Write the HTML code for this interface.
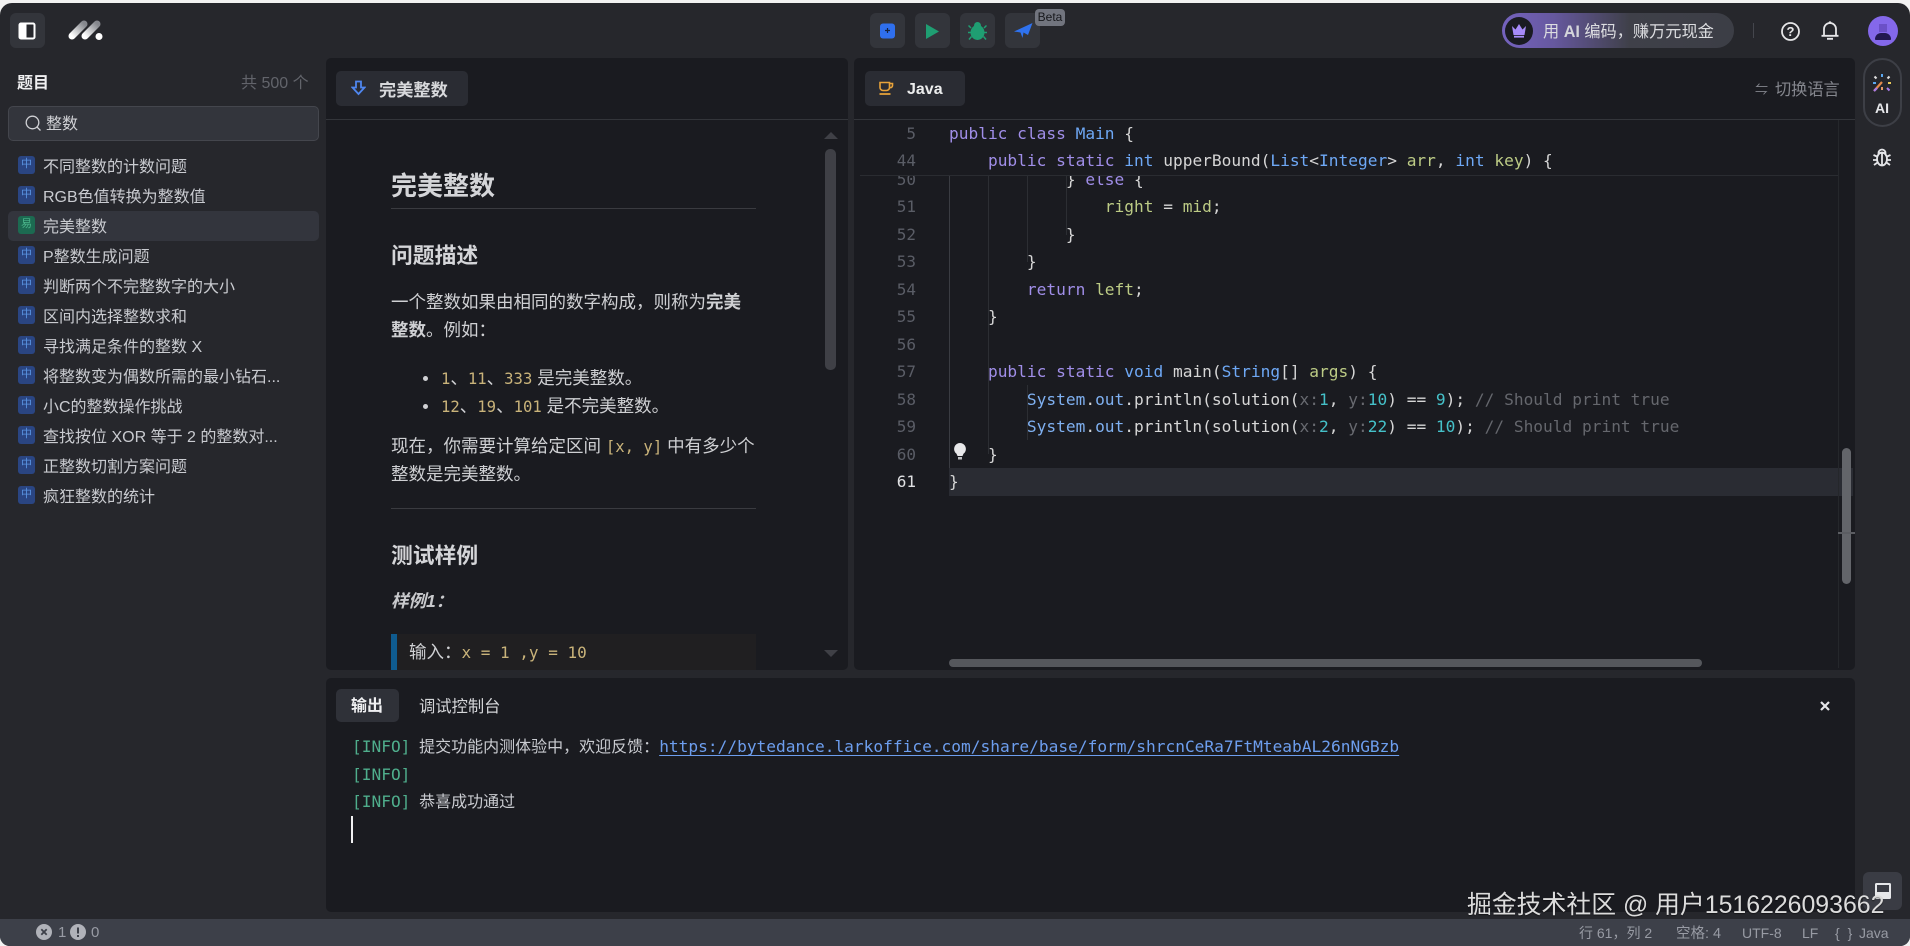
<!DOCTYPE html>
<html lang="zh"><head><meta charset="utf-8"><title>完美整数</title>
<style>
*{box-sizing:border-box;margin:0;padding:0}
html,body{width:1910px;height:946px;overflow:hidden;background:#f2f2f2}
body{font-family:"Liberation Sans","Noto Sans CJK SC",sans-serif;position:relative}
#app{position:absolute;left:0;top:3px;width:1910px;height:943px;background:#26272c;border-radius:12px 12px 10px 10px;overflow:hidden}
.a{position:absolute;white-space:pre}
.abs{position:absolute}
#root{position:absolute;left:0;top:-3px;width:1910px;height:946px}
.btn{position:absolute;top:13px;width:35px;height:35px;border-radius:6px;background:#33353b}
.panel{position:absolute;background:#1a1b20;border-radius:5px}
.row{position:absolute;left:43px;font-size:16px;line-height:24px;color:#c9cbd0;white-space:pre}
.tag{position:absolute;left:18px;width:17px;height:18px;border-radius:3px;background:#2a4582;color:#5a94e2;font-size:11px;line-height:17px;text-align:center}
.md{color:#cfd0d3;font-size:17.5px;line-height:28px}
.h{color:#d4d5d8;font-weight:700}
.hr{position:absolute;left:391px;width:365px;height:1px;background:#3a3b40}
.mc{font-family:"DejaVu Sans Mono",monospace;color:#c9b37a;font-size:15.6px}
.ln{position:absolute;left:860px;width:56px;text-align:right;font:16px/27.5px "DejaVu Sans Mono",monospace;color:#5a5d66}
.cd{position:absolute;left:949px;font:16.18px/27.5px "DejaVu Sans Mono",monospace;color:#d6d6d6;white-space:pre}
.k{color:#a08ee8}.t{color:#6ea8f5}.v{color:#bccb85}.n{color:#45c1c9}.c{color:#65676d}.i{color:#686a70}.b{color:#7fb0f0}
.con{position:absolute;left:352px;font:16.18px/27px "DejaVu Sans Mono","Noto Sans CJK SC",monospace;color:#c9cbd0;white-space:pre}
.con .z{font-size:16px;margin-left:-1px}
.inf{color:#4fae8c}
.st{position:absolute;top:923px;font-size:14px;line-height:20px;color:#989ba4;white-space:pre}
.guide{position:absolute;width:1px;background:#2c2e33}
</style></head><body>
<div id="app"><div id="root">

<!-- top bar -->
<div class="btn" style="left:10px"></div>
<svg class="abs" style="left:18px;top:22px" width="20" height="18" viewBox="0 0 20 18"><rect x="1.5" y="1.5" width="15" height="15" rx="1.5" fill="#26272c" stroke="#fff" stroke-width="2"/><rect x="1.5" y="1.5" width="7" height="15" fill="#fff"/></svg>
<svg class="abs" style="left:66px;top:18px" width="40" height="24" viewBox="0 0 40 24"><defs><linearGradient id="lg" x1="0" y1="1" x2="1" y2="0"><stop offset="0" stop-color="#fff"/><stop offset="1" stop-color="#85878d"/></linearGradient></defs><path d="M6 18 L18 6" stroke="url(#lg)" stroke-width="7" stroke-linecap="round"/><path d="M19 18 L31 6" stroke="url(#lg)" stroke-width="7" stroke-linecap="round"/><circle cx="33" cy="18.500" r="3.500" fill="#fff"/></svg>

<div class="btn" style="left:870px"></div><div class="btn" style="left:915px"></div><div class="btn" style="left:960px"></div><div class="btn" style="left:1005px"></div>
<svg class="abs" style="left:880px;top:23px" width="16" height="16" viewBox="0 0 16 16"><rect width="15" height="15" y=".5" rx="3" fill="#2f6fed"/><path d="M7.500 5v5M5 7.500h5" stroke="#16233f" stroke-width="1.200"/></svg>
<svg class="abs" style="left:926px;top:24px" width="14" height="15" viewBox="0 0 14 15"><path d="M0 0L13 7.500L0 15Z" fill="#1f9e72"/></svg>
<svg class="abs" style="left:968px;top:21px" width="19" height="20" viewBox="0 0 19 20"><ellipse cx="9.500" cy="11.500" rx="7" ry="7.500" fill="#1f9e72"/><circle cx="9.500" cy="4.500" r="3.500" fill="#1f9e72"/><path d="M3 7L0.500 4.500M3.500 11.500H0M3.500 15.500L1 18.500M16 7l2.500-2.500M15.500 11.500H19M15.500 15.500l2.500 3" stroke="#1f9e72" stroke-width="1.500"/></svg>
<svg class="abs" style="left:1014px;top:22px" width="19" height="18" viewBox="0 0 19 18"><path d="M0 9.500L18.500 1L14 13L9.500 10.500L8.500 16L6.500 10.500Z" fill="#2f72ee"/></svg>
<div class="abs" style="left:1035px;top:9px;width:30px;height:17px;border-radius:4px;background:#71747e;color:#17181c;font-size:12px;line-height:17px;text-align:center">Beta</div>

<div class="abs" style="left:1502px;top:13px;width:232px;height:35px;border-radius:18px;background:linear-gradient(90deg,#7563bf 0%,#66589f 22%,#3f4049 55%,#3c3e46 100%)"></div>
<div class="abs" style="left:1505px;top:17px;width:28px;height:28px;border-radius:50%;background:#1a1b22"></div>
<svg class="abs" style="left:1511px;top:23px" width="16" height="15" viewBox="0 0 16 15"><path d="M1 3L4.500 6.500L8 1L11.500 6.500L15 3L13.500 12H2.500Z" fill="#a78bfa"/><rect x="3" y="12.800" width="10" height="1.800" fill="#a78bfa"/></svg>
<div class="a" style="left:1543px;top:20px;font-size:16.2px;line-height:24px;color:#dcdde0">用 <b style="color:#d4d5da">AI</b> 编码，赚万元现金</div>
<div class="abs" style="left:1753px;top:23px;width:1px;height:15px;background:#44464d"></div>
<svg class="abs" style="left:1780px;top:21px" width="21" height="21" viewBox="0 0 21 21"><circle cx="10.500" cy="10.500" r="8.500" fill="none" stroke="#e6e6e8" stroke-width="1.800"/><text x="10.500" y="15" font-size="13" font-weight="700" fill="#e6e6e8" text-anchor="middle" font-family="Liberation Sans">?</text></svg>
<svg class="abs" style="left:1820px;top:20px" width="20" height="21" viewBox="0 0 20 21"><path d="M4 15.500V9a6 6 0 0 1 12 0v6.500M1.500 15.800H18.500" fill="none" stroke="#e6e6e8" stroke-width="1.800"/><circle cx="10" cy="2.500" r="1.300" fill="#e6e6e8"/><path d="M7 18.800h6" stroke="#e6e6e8" stroke-width="1.800"/></svg>
<div class="abs" style="left:1868px;top:16px;width:30px;height:30px;border-radius:50%;background:#8468ea;overflow:hidden"><div class="abs" style="left:11px;top:8px;width:8px;height:8px;background:#6b50c7"></div><div class="abs" style="left:7px;top:17px;width:16px;height:7px;border-radius:7px 7px 1px 1px;background:#22184f"></div></div>

<!-- sidebar -->
<div class="a" style="left:17px;top:72px;font-size:16px;line-height:24px;font-weight:700;color:#f0f0f2">题目</div>
<div class="a" style="left:241px;top:72px;font-size:16px;line-height:24px;color:#62646b">共 500 个</div>
<div class="abs" style="left:8px;top:106px;width:311px;height:35px;border-radius:5px;background:#33353c;border:1px solid #44464d"></div>
<svg class="abs" style="left:25px;top:115px" width="17" height="17" viewBox="0 0 17 17"><circle cx="7.500" cy="7.500" r="6.300" fill="none" stroke="#d0d1d5" stroke-width="1.300"/><path d="M12 12l3.500 3.500" stroke="#d0d1d5" stroke-width="1.300"/></svg>
<div class="a" style="left:46px;top:113px;font-size:16px;line-height:24px;color:#d0d1d5">整数</div>
<div class="abs" style="left:8px;top:211px;width:311px;height:30px;border-radius:5px;background:#33353d"></div>

<div class="tag" style="top:156px">中</div><div class="row" style="top:156px">不同整数的计数问题</div>
<div class="tag" style="top:186px">中</div><div class="row" style="top:186px">RGB色值转换为整数值</div>
<div class="tag" style="top:216px;background:#1c6a51;color:#4ab68b">易</div><div class="row" style="top:216px">完美整数</div>
<div class="tag" style="top:246px">中</div><div class="row" style="top:246px">P整数生成问题</div>
<div class="tag" style="top:276px">中</div><div class="row" style="top:276px">判断两个不完整数字的大小</div>
<div class="tag" style="top:306px">中</div><div class="row" style="top:306px">区间内选择整数求和</div>
<div class="tag" style="top:336px">中</div><div class="row" style="top:336px">寻找满足条件的整数 X</div>
<div class="tag" style="top:366px">中</div><div class="row" style="top:366px">将整数变为偶数所需的最小钻石...</div>
<div class="tag" style="top:396px">中</div><div class="row" style="top:396px">小C的整数操作挑战</div>
<div class="tag" style="top:426px">中</div><div class="row" style="top:426px">查找按位 XOR 等于 2 的整数对...</div>
<div class="tag" style="top:456px">中</div><div class="row" style="top:456px">正整数切割方案问题</div>
<div class="tag" style="top:486px">中</div><div class="row" style="top:486px">疯狂整数的统计</div>

<!-- description panel -->
<div class="panel" style="left:326px;top:58px;width:522px;height:612px"></div>
<div class="abs" style="left:326px;top:119px;width:522px;height:1px;background:#33353a"></div>
<div class="abs" style="left:336px;top:71px;width:132px;height:35px;border-radius:5px;background:#2a2c33"></div>
<svg class="abs" style="left:351px;top:80px" width="15" height="16" viewBox="0 0 15 16"><path d="M5 1.500h5v6h3.500L7.500 14 1.500 7.500H5Z" fill="none" stroke="#4f86ee" stroke-width="1.800"/></svg>
<div class="a" style="left:379px;top:78px;font-size:17.2px;line-height:24px;font-weight:700;color:#d8d9dc">完美整数</div>

<div class="a h" style="left:391px;top:168px;font-size:26px;line-height:36px">完美整数</div>
<div class="hr" style="top:208px"></div>
<div class="a h" style="left:391px;top:241px;font-size:21.8px;line-height:30px">问题描述</div>
<div class="a md" style="left:391px;top:288px">一个整数如果由相同的数字构成，则称为<b>完美</b></div>
<div class="a md" style="left:391px;top:316px"><b>整数</b>。例如：</div>
<div class="abs" style="left:423px;top:376px;width:5px;height:5px;border-radius:50%;background:#d0d1d4"></div>
<div class="a md" style="left:441px;top:364px"><span class="mc">1</span>、<span class="mc">11</span>、<span class="mc">333</span> 是完美整数。</div>
<div class="abs" style="left:423px;top:404px;width:5px;height:5px;border-radius:50%;background:#d0d1d4"></div>
<div class="a md" style="left:441px;top:392px"><span class="mc">12</span>、<span class="mc">19</span>、<span class="mc">101</span> 是不完美整数。</div>
<div class="a md" style="left:391px;top:432px">现在，你需要计算给定区间 <span class="mc">[x, y]</span> 中有多少个</div>
<div class="a md" style="left:391px;top:460px">整数是完美整数。</div>
<div class="hr" style="top:508px"></div>
<div class="a h" style="left:391px;top:541px;font-size:21.8px;line-height:30px">测试样例</div>
<div class="a" style="left:391px;top:587px;font-size:17.5px;line-height:28px;font-weight:700;font-style:italic;color:#c8c9cc">样例1：</div>
<div class="abs" style="left:391px;top:634px;width:365px;height:36px;background:#201f21"></div>
<div class="abs" style="left:391px;top:634px;width:6px;height:36px;background:#0f5b8f"></div>
<div class="a md" style="left:409px;top:638px">输入：<span class="mc" style="font-size:16px">x = 1 ,y = 10</span></div>
<div class="abs" style="left:825px;top:149px;width:11px;height:221px;border-radius:5px;background:#3f4046"></div>
<svg class="abs" style="left:823px;top:131px" width="16" height="9"><path d="M8 1L15 8H1Z" fill="#3f4046"/></svg>
<svg class="abs" style="left:823px;top:649px" width="16" height="9"><path d="M1 1H15L8 8Z" fill="#3f4046"/></svg>

<!-- editor panel -->
<div class="panel" style="left:854px;top:58px;width:1001px;height:612px"></div>
<div class="abs" style="left:854px;top:119px;width:1001px;height:1px;background:#33353a"></div>
<div class="abs" style="left:865px;top:71px;width:100px;height:35px;border-radius:5px;background:#2a2c33"></div>
<svg class="abs" style="left:878px;top:81px" width="16" height="15" viewBox="0 0 16 15"><path d="M2 1.500h9.500v5a3 3 0 0 1-3 3h-3.500a3 3 0 0 1-3-3ZM11.500 2.500h3v2a2 2 0 0 1-3 1.800" fill="none" stroke="#e8a33a" stroke-width="1.600"/><path d="M1.500 13h11" stroke="#e8a33a" stroke-width="1.800"/></svg>
<div class="a" style="left:907px;top:78px;font-size:16px;line-height:24px;font-weight:700;color:#eceded">Java</div>
<div class="a" style="left:1755px;top:78px;font-size:13px;line-height:24px;color:#85878e">⇋</div>
<div class="a" style="left:1775px;top:78px;font-size:16.2px;line-height:24px;color:#85878e">切换语言</div>

<!-- code body clipped -->
<div class="abs" style="left:854px;top:175px;width:1001px;height:493px;overflow:hidden">
 <div class="abs" style="left:95px;top:293px;width:904px;height:28px;background:#2a2c33"></div>
 <div class="abs" style="left:-854px;top:-175px;width:1910px;height:946px">
  <div class="guide" style="left:949px;top:175px;height:293px;background:#3a3c42"></div>
  <div class="guide" style="left:988px;top:175px;height:279px"></div>
  <div class="guide" style="left:1027px;top:175px;height:87px"></div>
  <div class="guide" style="left:1066px;top:175px;height:60px"></div>
  <div class="guide" style="left:1027px;top:385px;height:55px"></div>
  <div class="ln" style="top:165.75px">50</div><div class="cd" style="top:165.75px">            } <span class="k">else</span> {</div>
  <div class="ln" style="top:193.25px">51</div><div class="cd" style="top:193.25px">                <span class="v">right</span> = <span class="v">mid</span>;</div>
  <div class="ln" style="top:220.75px">52</div><div class="cd" style="top:220.75px">            }</div>
  <div class="ln" style="top:248.25px">53</div><div class="cd" style="top:248.25px">        }</div>
  <div class="ln" style="top:275.75px">54</div><div class="cd" style="top:275.75px">        <span class="k">return</span> <span class="v">left</span>;</div>
  <div class="ln" style="top:303.25px">55</div><div class="cd" style="top:303.25px">    }</div>
  <div class="ln" style="top:330.75px">56</div>
  <div class="ln" style="top:358.25px">57</div><div class="cd" style="top:358.25px">    <span class="k">public static</span> <span class="t">void</span> main(<span class="t">String</span>[] <span class="v">args</span>) {</div>
  <div class="ln" style="top:385.75px">58</div><div class="cd" style="top:385.75px">        <span class="b">System</span>.<span class="b">out</span>.println(solution(<span class="i">x:</span><span class="n">1</span>, <span class="i">y:</span><span class="n">10</span>) == <span class="n">9</span>); <span class="c">// Should print true</span></div>
  <div class="ln" style="top:413.25px">59</div><div class="cd" style="top:413.25px">        <span class="b">System</span>.<span class="b">out</span>.println(solution(<span class="i">x:</span><span class="n">2</span>, <span class="i">y:</span><span class="n">22</span>) == <span class="n">10</span>); <span class="c">// Should print true</span></div>
  <div class="ln" style="top:440.75px">60</div><div class="cd" style="top:440.75px">    }</div>
  <div class="ln" style="top:468.25px;color:#e0e1e3">61</div><div class="cd" style="top:468.25px">}</div>
 </div>
</div>
<!-- sticky -->
<div class="abs" style="left:860px;top:120px;width:978px;height:56px;background:#1a1b20;border-bottom:1px solid #2a2c31"></div>
<div class="ln" style="top:119.75px">5</div><div class="cd" style="top:119.75px"><span class="k">public class</span> <span class="t">Main</span> {</div>
<div class="ln" style="top:147.25px">44</div><div class="cd" style="top:147.25px">    <span class="k">public static</span> <span class="t">int</span> upperBound(<span class="t">List</span>&lt;<span class="t">Integer</span>&gt; <span class="v">arr</span>, <span class="t">int</span> <span class="v">key</span>) {</div>
<svg class="abs" style="left:953px;top:442px" width="14" height="18" viewBox="0 0 14 18"><path d="M7 1a6 6 0 0 1 3.500 10.800L9.500 14h-5L3.500 11.800A6 6 0 0 1 7 1Z" fill="#e8e8ea"/><rect x="5" y="15" width="4" height="2.500" fill="#c0c1c4"/></svg>
<div class="abs" style="left:1838px;top:120px;width:1px;height:548px;background:#25272b"></div>
<div class="abs" style="left:1842px;top:448px;width:9px;height:136px;border-radius:5px;background:#63656a"></div>
<div class="abs" style="left:1838px;top:532px;width:17px;height:2px;background:#5b5d62"></div>
<div class="abs" style="left:949px;top:659px;width:753px;height:8px;border-radius:4px;background:#55575c"></div>

<!-- right rail -->
<div class="abs" style="left:1863px;top:58px;width:39px;height:69px;border-radius:20px;border:2px solid #3d3f46"></div>
<svg class="abs" style="left:1871px;top:72px" width="22" height="22" viewBox="0 0 22 22"><path d="M3 19L11 10" stroke="#e58a4a" stroke-width="2.200"/><path d="M3 19l3-3" stroke="#a97be8" stroke-width="2.200"/><path d="M11 2v3" stroke="#5ba8f0" stroke-width="2"/><path d="M3.500 4.500l2 2" stroke="#e0e0e0" stroke-width="2"/><path d="M18.500 4.500l-2 2" stroke="#e0e0e0" stroke-width="2"/><path d="M2 11h3" stroke="#5ba8f0" stroke-width="2"/><path d="M17 11h3" stroke="#e8c95a" stroke-width="2"/><path d="M16 16l2.500 2.500" stroke="#a97be8" stroke-width="2"/><path d="M11 15v3" stroke="#e89a6a" stroke-width="2"/></svg>
<div class="a" style="left:1875px;top:99px;font-size:14px;line-height:18px;font-weight:700;color:#e6e7ea">AI</div>
<svg class="abs" style="left:1873px;top:147px" width="18" height="20" viewBox="0 0 18 20"><ellipse cx="9" cy="12" rx="5" ry="6.500" fill="none" stroke="#e4e5e8" stroke-width="1.800"/><path d="M5.500 6a3.500 3.500 0 0 1 7 0ZM9 6v12.500M0.500 8L4 9.500M0 13h4M1 18l3.500-2.500M17.500 8L14 9.500M18 13h-4M17 18l-3.500-2.500" fill="none" stroke="#e4e5e8" stroke-width="1.800"/></svg>
<div class="abs" style="left:1863px;top:872px;width:39px;height:38px;border-radius:6px;background:#3a3c44"></div>
<svg class="abs" style="left:1874px;top:882px" width="18" height="18" viewBox="0 0 18 18"><rect x="1" y="1" width="16" height="16" rx="1.500" fill="#e6e7ea"/><rect x="3" y="3" width="12" height="7" fill="#3a3c44"/></svg>

<!-- console -->
<div class="panel" style="left:326px;top:678px;width:1529px;height:234px"></div>
<div class="abs" style="left:336px;top:689px;width:63px;height:33px;border-radius:5px;background:#2f3138"></div>
<div class="a" style="left:351px;top:695px;font-size:16px;line-height:24px;font-weight:700;color:#f0f0f2">输出</div>
<div class="a" style="left:419px;top:695px;font-size:16.3px;line-height:24px;color:#d4d5d8">调试控制台</div>
<svg class="abs" style="left:1819px;top:700px" width="12" height="12" viewBox="0 0 12 12"><path d="M2 2l8 8M10 2l-8 8" stroke="#e4e5e8" stroke-width="2.200"/></svg>
<div class="con" style="top:733px"><span class="inf">[INFO]</span> <span class="z">提交功能内测体验中，欢迎反馈：</span><span style="color:#6d9eee;text-decoration:underline;text-underline-offset:3px">https://bytedance.larkoffice.com/share/base/form/shrcnCeRa7FtMteabAL26nNGBzb</span></div>
<div class="con" style="top:761px"><span class="inf">[INFO]</span></div>
<div class="con" style="top:788px"><span class="inf">[INFO]</span> <span class="z">恭喜成功通过</span></div>
<div class="abs" style="left:351px;top:816px;width:2px;height:27px;background:#f0f0f2"></div>

<!-- status bar -->
<div class="abs" style="left:0;top:919px;width:1910px;height:27px;background:#3d4049"></div>
<svg class="abs" style="left:36px;top:924px" width="16" height="16" viewBox="0 0 16 16"><circle cx="8" cy="8" r="8" fill="#b0b2b9"/><path d="M5.300 5.300l5.400 5.400M10.700 5.300l-5.400 5.400" stroke="#3d4049" stroke-width="1.800"/></svg>
<div class="st" style="left:58px;font-size:15px">1</div>
<svg class="abs" style="left:70px;top:924px" width="16" height="16" viewBox="0 0 16 16"><circle cx="8" cy="8" r="8" fill="#b0b2b9"/><path d="M8 3.500v6M8 11v2" stroke="#3d4049" stroke-width="2"/></svg>
<div class="st" style="left:91px;font-size:15px">0</div>
<div class="st" style="left:1579px">行 61，列 2</div>
<div class="st" style="left:1676px;top:924px;font-size:14.5px">空格: 4</div>
<div class="st" style="left:1742px">UTF-8</div>
<div class="st" style="left:1802px">LF</div>
<div class="st" style="left:1835px;letter-spacing:2px">{ }</div>
<div class="st" style="left:1859px">Java</div>

<!-- watermark -->
<div class="a" style="left:1467px;top:889px;font-size:24.85px;line-height:34px;color:#dcdcdc;text-shadow:0 1px 1px rgba(0,0,0,.45)">掘金技术社区 @ 用户1516226093662</div>

</div></div>
</body></html>
